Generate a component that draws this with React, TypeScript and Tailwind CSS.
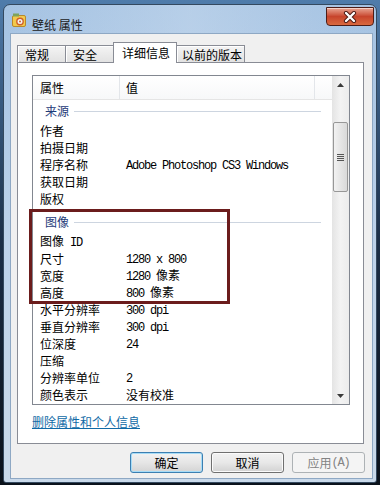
import type { ReactNode } from "react";

const M = ({ children }: { children: ReactNode }) => (
  <span className="font-[family-name:'Liberation_Mono',monospace] text-[12px] tracking-[-1.2px]">{children}</span>
);

type Row = { label: ReactNode; value?: ReactNode };

const source: Row[] = [
  { label: "作者" },
  { label: "拍摄日期" },
  { label: "程序名称", value: <M>Adobe Photoshop CS3 Windows</M> },
  { label: "获取日期" },
  { label: "版权" },
];

const image: Row[] = [
  { label: <>图像<M> ID</M></> },
  { label: "尺寸", value: <M>1280 x 800</M> },
  { label: "宽度", value: <><M>1280 </M>像素</> },
  { label: "高度", value: <><M>800 </M>像素</> },
  { label: "水平分辨率", value: <M>300 dpi</M> },
  { label: "垂直分辨率", value: <M>300 dpi</M> },
  { label: "位深度", value: <M>24</M> },
  { label: "压缩" },
  { label: "分辨率单位", value: <M>2</M> },
  { label: "颜色表示", value: "没有校准" },
];

function Group({ title, rows, className = "" }: { title: string; rows: Row[]; className?: string }) {
  return (
    <div className={className}>
      <div className="flex h-[22px] items-center pl-[12px] pr-[11px]">
        <span className="text-[#1e3a78]">{title}</span>
        <div className="ml-[5px] h-px flex-1 bg-[#cdd5e0]" />
      </div>
      {rows.map((r, i) => (
        <div key={i} className="flex h-[17px] items-center whitespace-nowrap">
          <div className="w-[86px] pl-[7px]">{r.label}</div>
          <div className="pl-[7px]">{r.value}</div>
        </div>
      ))}
    </div>
  );
}

function Tab({ label, className }: { label: string; className: string }) {
  return (
    <div
      className={`flex items-center border border-b-0 border-[#898c95] bg-gradient-to-b from-[#f4f4f4] to-[#e2e2e2] pt-[2px] leading-none shadow-[inset_1px_1px_0_#fff] ${className}`}
    >
      {label}
    </div>
  );
}

export default function App() {
  return (
    <div className="relative h-[485px] w-[380px] overflow-hidden bg-gradient-to-b from-[#4f7cab] via-[#1b2e47] to-[#0a111b] pl-[3px] pt-[4px] text-[12px] text-black font-[family-name:'Noto_Sans_CJK_SC',sans-serif]">
      <div className="flex h-[479px] w-[374px] flex-col rounded-t-[7px] rounded-b-[3px] border border-[#34495f] bg-gradient-to-b from-[#a4c2e2] via-[#bdd2ea] to-[#c9d9ea]">
        {/* title bar */}
        <div className="flex h-[28px] items-start bg-gradient-to-r from-transparent via-[#d3e2f2]/40 to-transparent">
          <svg className="ml-[8px] mt-[8px]" width="14" height="14" viewBox="0 0 14 14">
            <rect x="0.5" y="2.5" width="13" height="11" rx="1.5" fill="#f2c94c" stroke="#b8892a" />
            <rect x="1" y="0.5" width="6" height="3" fill="#7fa35a" />
            <circle cx="8" cy="8.5" r="3.2" fill="#f5f5f5" stroke="#d0602a" strokeWidth="1.4" />
            <circle cx="8" cy="8.5" r="1" fill="#d0602a" />
          </svg>
          <span className="ml-[6px] mt-[12px] leading-[16px] text-[#1a1a1a]">壁纸 属性</span>
          <div className="ml-auto mr-[2px] mt-[2px] flex h-[19px] w-[48px] items-center justify-center rounded-b-[4px] border border-[#4d1d17] bg-gradient-to-b from-[#e8a593] via-[#c7442c] to-[#d9693f] shadow-[inset_0_1px_0_#f6cfc4]">
            <svg width="14" height="12" viewBox="0 0 14 12">
              <path d="M3 2 L11 10 M11 2 L3 10" stroke="#4a1a14" strokeWidth="4.2" strokeLinecap="round" />
              <path d="M3 2 L11 10 M11 2 L3 10" stroke="#ffffff" strokeWidth="2.4" strokeLinecap="round" />
            </svg>
          </div>
        </div>

        {/* client area */}
        <div className="ml-[6px] mr-[3px] flex h-[446px] flex-col border border-[#8ea8c4] bg-[#f0f0f0] pt-[8px]">
          <div className="flex h-[20px] items-end pl-[6px]">
            <Tab label="常规" className="h-[17px] w-[49px] pl-[7px]" />
            <Tab label="安全" className="-ml-px h-[17px] w-[49px] pl-[7px]" />
            <div className="relative z-10 -mb-px -ml-px flex h-[21px] w-[64px] items-center border border-b-0 border-[#898c95] bg-white pl-[8px] leading-none">
              详细信息
            </div>
            <Tab label="以前的版本" className="-ml-px h-[17px] w-[69px] pl-[5px]" />
          </div>

          <div className="ml-[6px] h-[382px] w-[347px] border border-[#898c95] bg-white pl-[14px] pt-[12px]">
            {/* list view */}
            <div className="flex h-[330px] w-[318px] border border-[#828790] bg-white">
              <div className="flex w-[299px] flex-col overflow-hidden">
                <div className="flex h-[24px] shrink-0 border-b border-[#e5e5e5] bg-gradient-to-b from-white to-[#f7f8f9]">
                  <div className="flex w-[87px] items-center border-r border-[#e3e6ea] pl-[7px]">属性</div>
                  <div className="flex w-[195px] items-center border-r border-[#e3e6ea] pl-[6px]">值</div>
                </div>
                <Group title="来源" rows={source} />
                <Group title="图像" rows={image} className="mt-[4px]" />
              </div>
              {/* scrollbar */}
              <div className="flex w-[17px] flex-col bg-gradient-to-r from-[#e4e4e4] via-[#f3f3f3] to-[#ececec]">
                <div className="flex h-[17px] items-center justify-center">
                  <svg width="7" height="4" viewBox="0 0 7 4"><path d="M0 4 L3.5 0 L7 4 Z" fill="#3a3a3a" /></svg>
                </div>
                <div className="h-[29px]" />
                <div className="mx-px flex h-[70px] items-center justify-center rounded-[2px] border border-[#979797] bg-gradient-to-r from-[#f2f2f2] to-[#d9d9d9]">
                  <div className="flex w-[7px] flex-col gap-[1px]">
                    <div className="h-px bg-[#555]" />
                    <div className="h-px bg-[#555]" />
                    <div className="h-px bg-[#555]" />
                    <div className="h-px bg-[#555]" />
                  </div>
                </div>
                <div className="flex-1" />
                <div className="flex h-[17px] items-center justify-center">
                  <svg width="7" height="4" viewBox="0 0 7 4"><path d="M0 0 L7 0 L3.5 4 Z" fill="#3a3a3a" /></svg>
                </div>
              </div>
            </div>
            <div className="mt-[9px] leading-[16px] text-[#0f6aa6] underline">删除属性和个人信息</div>
          </div>

          <div className="mt-[8px] flex justify-end gap-[8px] pr-[7px]">
            <div className="flex h-[21px] w-[73px] items-center justify-center rounded-[3px] border border-[#3c7fb1] bg-gradient-to-b from-[#f2f2f2] via-[#e6e6e6] to-[#d4d4d4] shadow-[inset_0_0_0_1px_#a6dcf7]">
              确定
            </div>
            <div className="flex h-[21px] w-[73px] items-center justify-center rounded-[3px] border border-[#707070] bg-gradient-to-b from-[#f2f2f2] via-[#e8e8e8] to-[#d2d2d2] shadow-[inset_0_0_0_1px_#fbfbfb]">
              取消
            </div>
            <div className="flex h-[21px] w-[73px] items-center justify-center rounded-[3px] border border-[#adb2b5] bg-[#f4f4f4] text-[#838383]">
              应用<M>(A)</M>
            </div>
          </div>
        </div>
      </div>

      {/* annotation box */}
      <div className="absolute left-[29px] top-[209px] h-[95px] w-[201px] border-[3px] border-[#6b1c1c]" />
    </div>
  );
}
